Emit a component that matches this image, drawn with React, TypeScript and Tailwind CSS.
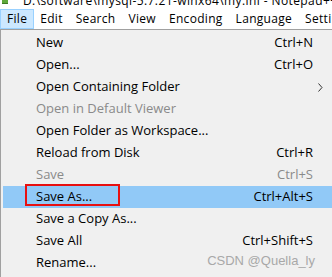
import React from "react";

type Item = { label: string; shortcut?: string; disabled?: boolean; sub?: boolean; active?: boolean };

const items: Item[] = [
  { label: "New", shortcut: "Ctrl+N" },
  { label: "Open...", shortcut: "Ctrl+O" },
  { label: "Open Containing Folder", sub: true },
  { label: "Open in Default Viewer", disabled: true },
  { label: "Open Folder as Workspace..." },
  { label: "Reload from Disk", shortcut: "Ctrl+R" },
  { label: "Save", shortcut: "Ctrl+S", disabled: true },
  { label: "Save As...", shortcut: "Ctrl+Alt+S", active: true },
  { label: "Save a Copy As..." },
  { label: "Save All", shortcut: "Ctrl+Shift+S" },
  { label: "Rename..." },
];

const menus = ["File", "Edit", "Search", "View", "Encoding", "Language", "Settings"];

export default function App() {
  return (
    <div
      className="w-[332px] h-[277px] overflow-hidden bg-white relative"
      style={{ fontFamily: '"Open Sans", "Noto Sans", sans-serif' }}
    >
      {/* title bar (cut off) */}
      <div className="h-[9px] overflow-hidden flex items-start pl-[2px]">
        <div className="w-[6px] h-[4px] bg-[#5fa83a] border-b border-[#3d7a22] shrink-0" />
        <div className="ml-[15px] -mt-[7px] text-[12px] leading-[16px] tracking-[0.4px] text-black whitespace-nowrap">
          D:\software\mysql-5.7.21-winx64\my.ini - Notepad++
        </div>
      </div>
      {/* menu bar */}
      <div className="h-[20px] flex items-stretch text-[12px] tracking-[0.3px] text-black bg-white">
        {menus.map((m, i) => (
          <div
            key={m}
            className={
              i === 0
                ? "px-[6px] flex items-center bg-[#cce8ff] border border-[#99d1ff]"
                : "px-[6px] flex items-center mr-[1px]"
            }
          >
            {m}
          </div>
        ))}
      </div>
      {/* dropdown */}
      <div className="border-l border-t border-[#a0a0a0] bg-[#f0f0f0] pl-[2px] pt-[2px] h-[250px] text-[13px]">
        {items.map((it) => (
          <div
            key={it.label}
            className={
              "h-[22px] flex items-center relative " +
              (it.active ? "bg-[#91c9f7] " : "") +
              (it.disabled ? "text-[#8a8a8a]" : "text-black")
            }
          >
            <div className="pl-[33px] flex-1 whitespace-nowrap">{it.label}</div>
            {it.shortcut && <div className="pr-[19px] whitespace-nowrap">{it.shortcut}</div>}
            {it.sub && (
              <svg className="absolute right-[9px] top-[7px]" width="5" height="9" viewBox="0 0 5 9">
                <path d="M0.5 0.5 L4 4.5 L0.5 8.5" fill="none" stroke="#333" strokeWidth="1" />
              </svg>
            )}
            {it.active && (
              <div className="absolute left-[22px] top-[-2px] w-[95px] h-[22px] border-2 border-[#e81010]" />
            )}
          </div>
        ))}
      </div>
      <div className="absolute right-[17px] bottom-[7px] text-[13px] text-[#a8a8a8] whitespace-nowrap" style={{ fontFamily: '"Liberation Sans", sans-serif' }}>
        CSDN @Quella_ly
      </div>
    </div>
  );
}
